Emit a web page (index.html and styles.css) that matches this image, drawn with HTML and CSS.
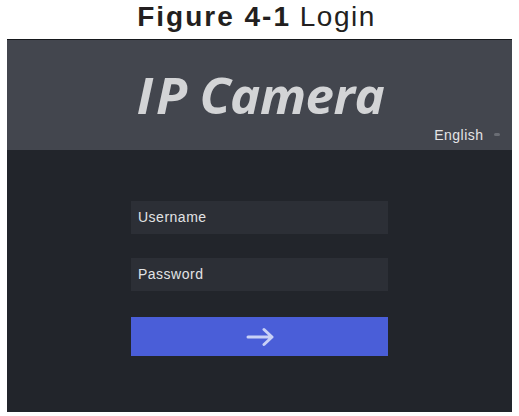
FILE: index.html
```html
<!DOCTYPE html>
<html lang="en">
<head>
  <meta charset="UTF-8" />
  <title>Figure 4-1 Login</title>
  <link rel="stylesheet" href="styles.css">
</head>
<body>
  <h1 class="caption"><b>Figure 4-1</b> <span class="caption-name">Login</span></h1>

  <div class="screen">
    <div class="header">
      <div class="brand"><span class="brand-i">I</span>P Camera</div>
      <div class="lang">English <span class="caret"></span></div>
    </div>

    <div class="login">
      <div class="field">Username</div>
      <div class="field">Password</div>
      <button class="submit">
        <svg width="30" height="20" viewBox="0 0 30 20">
          <path d="M2 10H26M18 2.5L26 10L18 17.5" fill="none" stroke="#c9d1f6" stroke-width="3" stroke-linecap="round" stroke-linejoin="round"/>
        </svg>
      </button>
    </div>
  </div>
</body>
</html>
```

FILE: styles.css
```css
body {
  margin: 0;
  background: #ffffff;
  font-family: 'Liberation Sans', Arial, sans-serif;
}
.caption {
  margin: 0;
  height: 39px;
  text-align: center;
  font-size: 28px;
  font-weight: normal;
  line-height: 34px;
  color: #231f20;
  word-spacing: 1px;
  padding-right: 6px;
}
.caption b {
  font-weight: bold;
  letter-spacing: 2px;
  word-spacing: 0;
}
.caption-name {
  letter-spacing: 1.5px;
}
.screen {
  margin: 0 7px;
  height: 373px;
  background: #22252b;
  border-top: 1px solid #16181c;
  box-sizing: border-box;
}
.header {
  height: 110px;
  background: #43464e;
  position: relative;
}
.brand {
  padding-top: 24px;
  text-align: center;
  font-family: 'Open Sans', sans-serif;
  font-style: italic;
  font-weight: bold;
  font-size: 51px;
  line-height: 60px;
  color: #d3d4d6;
  letter-spacing: -0.5px;
  padding-left: 2px;
}
.brand-i {
  letter-spacing: 3px;
}
.lang {
  position: absolute;
  right: 12px;
  top: 87px;
  font-size: 14px;
  color: #e4e4e6;
  letter-spacing: 0.5px;
}
.caret {
  display: inline-block;
  width: 6px;
  height: 3px;
  margin-left: 6px;
  vertical-align: 4px;
  background: #6a6d74;
  border-radius: 2px;
}
.login {
  width: 257px;
  margin: 51px auto 0;
  display: flex;
  flex-direction: column;
}
.field {
  height: 33px;
  background: #2c2f36;
  color: #e2e3e5;
  font-size: 14px;
  line-height: 33px;
  padding-left: 7px;
  letter-spacing: 0.5px;
  margin-bottom: 24px;
}
.field + .field {
  margin-bottom: 26px;
}
.submit {
  height: 39px;
  border: none;
  background: #4a5ed8;
  display: flex;
  align-items: center;
  justify-content: center;
  padding: 0 0 0 3px;
}
```
